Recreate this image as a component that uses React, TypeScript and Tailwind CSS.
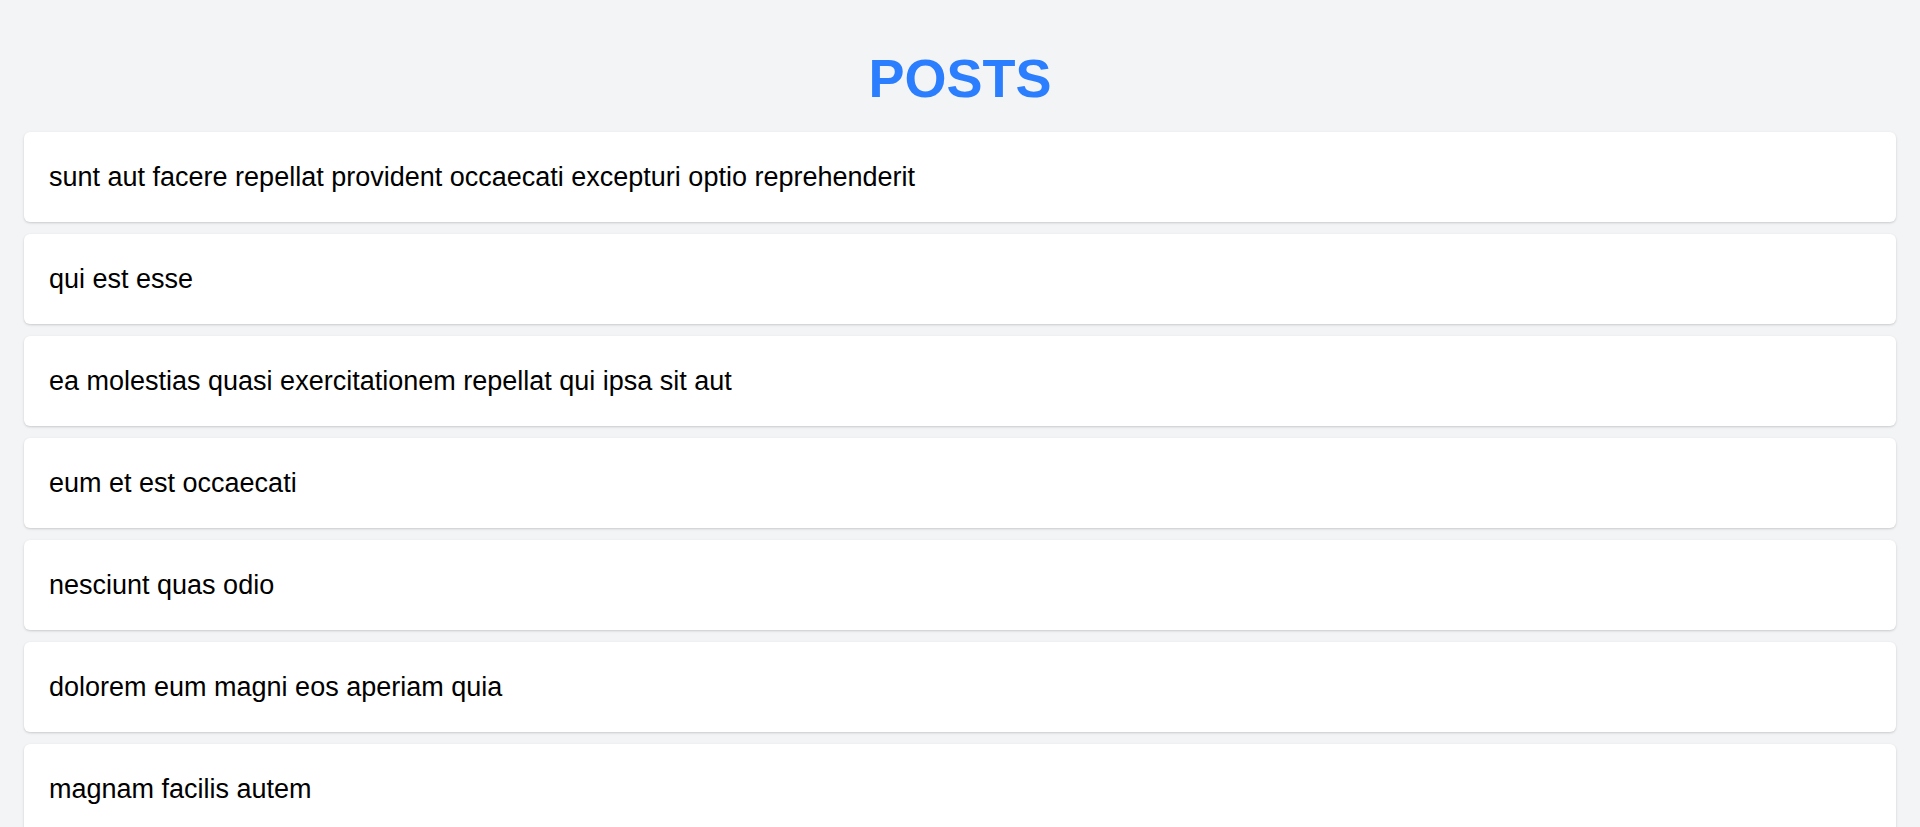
const posts = [
  { id: 1, title: "sunt aut facere repellat provident occaecati excepturi optio reprehenderit" },
  { id: 2, title: "qui est esse" },
  { id: 3, title: "ea molestias quasi exercitationem repellat qui ipsa sit aut" },
  { id: 4, title: "eum et est occaecati" },
  { id: 5, title: "nesciunt quas odio" },
  { id: 6, title: "dolorem eum magni eos aperiam quia" },
  { id: 7, title: "magnam facilis autem" },
  { id: 8, title: "dolorem dolore est ipsam" },
  { id: 9, title: "nesciunt iure omnis dolorem tempora et accusantium" },
  { id: 10, title: "optio molestias id quia eum" },
];

function PostCard({ title }: { title: string }) {
  return (
    <div className="h-[90px] flex items-center px-[25px] bg-white rounded-md shadow-[0_1px_3px_rgba(0,0,0,0.12),0_1px_2px_rgba(0,0,0,0.06)]">
      <p className="text-[27px] leading-[32px] text-black">{title}</p>
    </div>
  );
}

export default function App() {
  return (
    <div className="min-h-screen bg-gray-100 px-6 pt-6 pb-6" style={{ fontFamily: '"Liberation Sans", Arial, sans-serif' }}>
      <h1 className="my-[27px] text-center text-[54px] leading-none font-bold text-blue-500">POSTS</h1>
      <div className="flex flex-col gap-3">
        {posts.map((post) => (
          <PostCard key={post.id} title={post.title} />
        ))}
      </div>
    </div>
  );
}
